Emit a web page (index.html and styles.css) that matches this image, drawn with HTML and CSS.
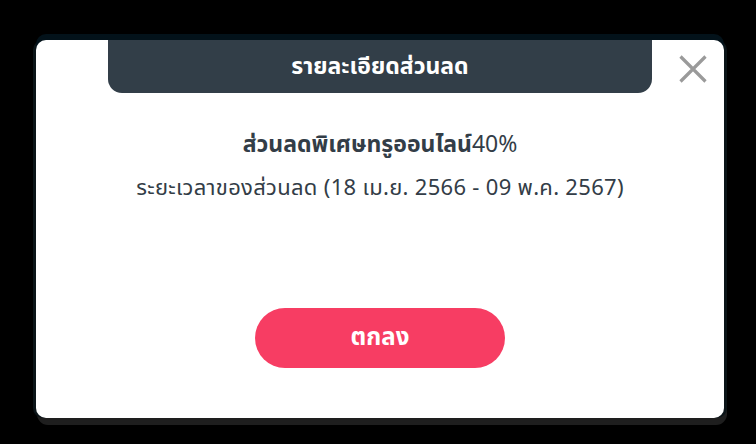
FILE: index.html
```html
<!DOCTYPE html>
<html lang="th">
<head>
    <meta charset="UTF-8">
    <meta name="viewport" content="width=device-width, initial-scale=1.0">
    <title>รายละเอียดส่วนลด</title>
    <link rel="stylesheet" href="styles.css">
</head>
<body>
    <div class="overlay">
        <div class="modal">
            <div class="modal-head">
                <div class="tab">รายละเอียดส่วนลด</div>
                <button class="close" aria-label="ปิด">
                    <svg width="28" height="28" viewBox="0 0 28 28">
                        <path d="M1.5 1.5 L26.5 26.5 M26.5 1.5 L1.5 26.5" stroke="#9a9a9a" stroke-width="3.2" fill="none"/>
                    </svg>
                </button>
            </div>
            <div class="modal-body">
                <p class="promo">ส่วนลดพิเศษทรูออนไลน์<span class="pct">40%</span></p>
                <p class="period">ระยะเวลาของส่วนลด (18 เม.ย. 2566 - 09 พ.ค. 2567)</p>
            </div>
            <div class="modal-foot">
                <button class="ok">ตกลง</button>
            </div>
        </div>
    </div>
</body>
</html>
```

FILE: styles.css
```css
body {
    margin: 0;
    background-color: #000;
    font-family: "Noto Sans Thai", "Noto Sans", "DejaVu Sans", sans-serif;
}
.overlay {
    height: 444px;
    padding: 34px 29px 0 33px;
    box-sizing: border-box;
}
.modal {
    width: 688px;
    height: 378px;
    margin-top: 6px;
    margin-left: 3px;
    background-color: #fff;
    border-radius: 10px;
    box-shadow: 0 -6px 0 0 #03121a, -3px 0 0 0 #0b1418, 3px 0 0 0 #0b1418, 2px 6px 0 1px #1e1e1e;
    display: flex;
    flex-direction: column;
}
.modal-head {
    display: flex;
    justify-content: center;
    position: relative;
}
.tab {
    width: 544px;
    height: 53px;
    background-color: #323e48;
    color: #fff;
    font-size: 23px;
    font-weight: 700;
    display: flex;
    align-items: center;
    justify-content: center;
    border-radius: 0 0 14px 14px;
}
.close {
    position: absolute;
    right: 17px;
    top: 15px;
    background: none;
    border: none;
    padding: 0;
    cursor: pointer;
}
.modal-body {
    text-align: center;
    color: #333d47;
    padding-top: 37px;
}
.promo {
    margin: 0;
    font-size: 23px;
    font-weight: 700;
    line-height: 30px;
}
.pct {
    font-weight: 400;
}
.period {
    margin: 14px 0 0;
    font-size: 22px;
    letter-spacing: 0.3px;
    line-height: 30px;
}
.modal-foot {
    margin-top: auto;
    padding-bottom: 50px;
    display: flex;
    justify-content: center;
}
.ok {
    width: 250px;
    height: 60px;
    border: none;
    border-radius: 30px;
    background-color: #f73d63;
    color: #fff;
    font-family: inherit;
    font-size: 24px;
    font-weight: 700;
    cursor: pointer;
}
```
